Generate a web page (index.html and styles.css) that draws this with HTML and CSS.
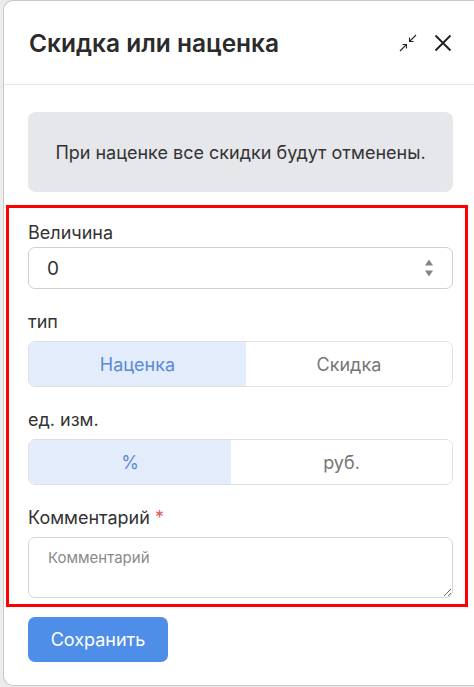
FILE: index.html
```html
<!DOCTYPE html>
<html lang="ru">
<head>
    <meta charset="UTF-8">
    <meta name="viewport" content="width=device-width, initial-scale=1.0">
    <title>Скидка или наценка</title>
    <link rel="stylesheet" href="styles.css">
</head>
<body>
    <div class="modal">
        <div class="modal-header">
            <h2 class="modal-title">Скидка или наценка</h2>
            <div class="modal-actions">
                <button class="icon-btn" title="Свернуть">
                    <svg width="18" height="18" viewBox="0 0 18 18" fill="none" stroke="#222" stroke-width="1.1">
                        <path d="M17 1 L10.5 7.5"/>
                        <path d="M10.5 3.5 V7.5 H14.5"/>
                        <path d="M1 17 L7.5 10.5"/>
                        <path d="M3.5 10.5 H7.5 V14.5"/>
                    </svg>
                </button>
                <button class="icon-btn" title="Закрыть">
                    <svg width="18" height="18" viewBox="0 0 18 18" fill="none" stroke="#1f1f1f" stroke-width="1.8">
                        <path d="M1.5 1.5 L16.5 16.5 M16.5 1.5 L1.5 16.5"/>
                    </svg>
                </button>
            </div>
        </div>

        <div class="modal-body">
            <div class="notice">При наценке все скидки будут отменены.</div>

            <form class="fields">
                <div class="field field-value">
                    <label>Величина</label>
                    <div class="number-input">
                        <input type="text" value="0">
                        <span class="spinner">
                            <svg width="10" height="20" viewBox="0 0 10 20" fill="#858585">
                                <path d="M5 1.5 L9 7.5 H1 Z"/>
                                <path d="M1 12.5 H9 L5 18.5 Z"/>
                            </svg>
                        </span>
                    </div>
                </div>

                <div class="field">
                    <label>тип</label>
                    <div class="segmented">
                        <button type="button" class="segment active">Наценка</button>
                        <button type="button" class="segment">Скидка</button>
                    </div>
                </div>

                <div class="field">
                    <label>ед. изм.</label>
                    <div class="segmented">
                        <button type="button" class="segment active">%</button>
                        <button type="button" class="segment">руб.</button>
                    </div>
                </div>

                <div class="field">
                    <label>Комментарий <span class="required">*</span></label>
                    <textarea placeholder="Комментарий"></textarea>
                </div>
            </form>

            <button class="btn-save">Сохранить</button>
        </div>
    </div>
</body>
</html>
```

FILE: styles.css
```css
* {
    box-sizing: border-box;
}
body {
    margin: 0;
    padding-left: 3px;
    background: #ececec;
    font-family: Inter, "Noto Sans", sans-serif;
    color: #333;
}
.modal {
    height: 686px;
    background: white;
    border: 1px solid #c9c9c9;
    border-right: none;
    border-radius: 10px 0 0 10px;
}
.modal-header {
    height: 84px;
    display: flex;
    align-items: center;
    justify-content: space-between;
    padding: 0 22px 0 25px;
    border-bottom: 1px solid #e6e6e6;
}
.modal-title {
    margin: 0;
    font-size: 24.5px;
    font-weight: 600;
    color: #2b2b2b;
}
.modal-actions {
    display: flex;
    align-items: center;
    gap: 17px;
}
.icon-btn {
    padding: 0;
    border: none;
    background: none;
    display: flex;
    cursor: pointer;
}
.modal-body {
    padding: 27px 21px 0 24px;
}
.notice {
    height: 80px;
    display: flex;
    align-items: center;
    justify-content: center;
    background: #e6e7eb;
    border-radius: 8px;
    font-size: 18px;
    color: #333;
}
.fields {
    position: relative;
    margin: 30px 0 0;
}
/* highlight frame around the form fields */
.fields::after {
    content: "";
    position: absolute;
    top: -17px;
    left: -22px;
    right: -15px;
    bottom: -9px;
    border: 3.5px solid #f00;
    pointer-events: none;
}
.field {
    display: flex;
    flex-direction: column;
    gap: 8px;
    margin-bottom: 22px;
}
.field:last-child {
    margin-bottom: 0;
}
.field-value {
    gap: 3px;
}
.field label {
    font-size: 18px;
    line-height: 22px;
    color: #333;
}
.required {
    color: #e05a5a;
}
.number-input {
    height: 42px;
    display: flex;
    align-items: center;
    border: 1px solid #cfcfcf;
    border-radius: 7px;
    padding: 0 18px 0 18px;
}
.number-input input {
    flex: 1;
    border: none;
    outline: none;
    padding: 0;
    font-family: inherit;
    font-size: 19px;
    color: #333;
}
.spinner {
    display: flex;
}
.segmented {
    display: flex;
    height: 46px;
    border: 1px solid #e0e0e0;
    border-radius: 7px;
    overflow: hidden;
}
.segment {
    flex: 1 1 auto;
    border: none;
    background: white;
    font-family: inherit;
    font-size: 18px;
    color: #767676;
    cursor: pointer;
}
.segment.active {
    background: #e3ecfa;
    color: #5b8ad6;
}
textarea {
    display: block;
    width: 100%;
    height: 61px;
    border: 1px solid #d6d6d6;
    border-radius: 7px;
    padding: 10px 19px;
    font-family: inherit;
    font-size: 15px;
    color: #333;
}
textarea::placeholder {
    color: #8a8a8a;
}
.btn-save {
    margin-top: 19px;
    width: 140px;
    height: 45px;
    border: none;
    border-radius: 7px;
    background: #4f8ee8;
    color: white;
    font-family: inherit;
    font-size: 18px;
    cursor: pointer;
}
```
